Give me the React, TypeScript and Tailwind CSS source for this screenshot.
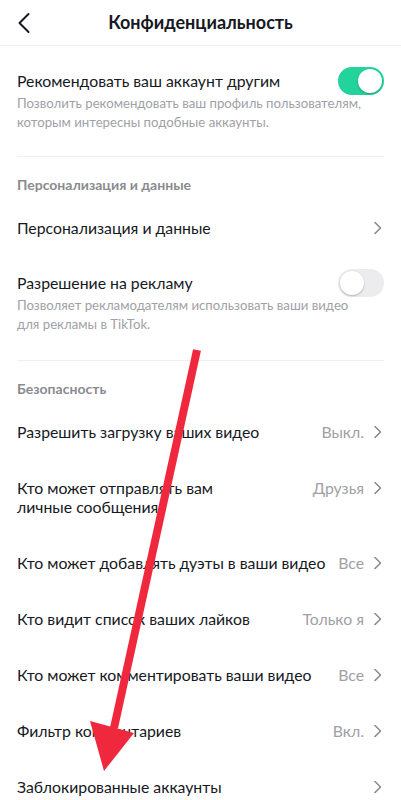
import React from "react";

const font = { fontFamily: "Lato, 'Noto Sans', sans-serif" };

function Chevron() {
  return (
    <svg width="9" height="14" viewBox="0 0 9 14" fill="none" className="shrink-0">
      <path d="M2 1.5 L7.5 7 L2 12.5" stroke="#8a8b91" strokeWidth="1.6" strokeLinecap="round" strokeLinejoin="round" />
    </svg>
  );
}

function Toggle({ on }: { on: boolean }) {
  return (
    <div className={`w-[46px] h-[28px] rounded-full flex items-center px-[2px] shrink-0 ${on ? "bg-[#22d39b] justify-end" : "bg-[#ececee] justify-start"}`}>
      <div className="w-[24px] h-[24px] rounded-full bg-white shadow-[0_1px_2px_rgba(0,0,0,0.25)]" />
    </div>
  );
}

function NavRow({ label, value }: { label: string; value?: string }) {
  return (
    <div className="flex items-center justify-between pl-[17px] pr-[19px] h-[56px]">
      <div className="text-[15.8px] leading-[20px] text-[#161823] whitespace-nowrap">{label}</div>
      <div className="flex items-center gap-[9px] pl-2">
        {value && <span className="text-[15.8px] text-[#a0a1a6] leading-[20px] whitespace-nowrap">{value}</span>}
        <Chevron />
      </div>
    </div>
  );
}

export default function App() {
  return (
    <div className="relative w-[401px] h-[800px] bg-white overflow-hidden" style={font}>
      <div className="h-[46px] flex items-center relative border-b border-[#efeff0]">
        <svg className="absolute left-[17px] top-[12px]" width="14" height="22" viewBox="0 0 14 22" fill="none">
          <path d="M11.5 2 L2.5 11 L11.5 20" stroke="#161823" strokeWidth="2" strokeLinecap="round" strokeLinejoin="round" />
        </svg>
        <div className="w-full text-center text-[18px] font-bold text-[#161823]">Конфиденциальность</div>
      </div>

      <div className="mx-[17px] pt-[25px] pb-[24px] border-b border-[#efeff0]">
        <div className="flex items-center justify-between h-[20px]">
          <div className="text-[15.8px] text-[#161823] leading-[20px]">Рекомендовать ваш аккаунт другим</div>
          <Toggle on />
        </div>
        <div className="text-[13.2px] leading-[19px] text-[#a0a1a6] mt-[3px]">
          Позволить рекомендовать ваш профиль пользователям, которым интересны подобные аккаунты.
        </div>
      </div>

      <div className="px-[17px] pt-[20px] pb-[7px] text-[14px] leading-[16px] font-bold text-[#8a8b91]">Персонализация и данные</div>
      <NavRow label="Персонализация и данные" />

      <div className="mx-[17px] pt-[17px] pb-[26px] border-b border-[#efeff0]">
        <div className="flex items-center justify-between h-[20px]">
          <div className="text-[15.8px] text-[#161823] leading-[20px]">Разрешение на рекламу</div>
          <Toggle on={false} />
        </div>
        <div className="text-[13.2px] leading-[19px] text-[#a0a1a6] mt-[3px] pr-[12px]">
          Позволяет рекламодателям использовать ваши видео для рекламы в TikTok.
        </div>
      </div>

      <div className="px-[17px] pt-[20px] pb-[7px] text-[14px] leading-[16px] font-bold text-[#8a8b91]">Безопасность</div>
      <div className="flex flex-col">
        <NavRow label="Разрешить загрузку ваших видео" value="Выкл." />
        <div className="flex items-start justify-between pl-[17px] pr-[19px] h-[75px] pt-[18px]">
          <div className="text-[15.8px] leading-[19px] text-[#161823]">
            Кто может отправлять вам
            <br />
            личные сообщения
          </div>
          <div className="flex items-center gap-[9px] pl-2 h-[19px]">
            <span className="text-[15.8px] text-[#a0a1a6] leading-[19px]">Друзья</span>
            <Chevron />
          </div>
        </div>
        <NavRow label="Кто может добавлять дуэты в ваши видео" value="Все" />
        <NavRow label="Кто видит список ваших лайков" value="Только я" />
        <NavRow label="Кто может комментировать ваши видео" value="Все" />
        <NavRow label="Фильтр комментариев" value="Вкл." />
        <NavRow label="Заблокированные аккаунты" />
      </div>

      <svg className="absolute inset-0 pointer-events-none" width="401" height="800" viewBox="0 0 401 800">
        <line x1="197" y1="350" x2="114" y2="728" stroke="#f0283e" strokeWidth="8" strokeLinecap="butt" />
        <polygon points="90,721 134,733 104,771" fill="#f0283e" />
      </svg>
    </div>
  );
}
